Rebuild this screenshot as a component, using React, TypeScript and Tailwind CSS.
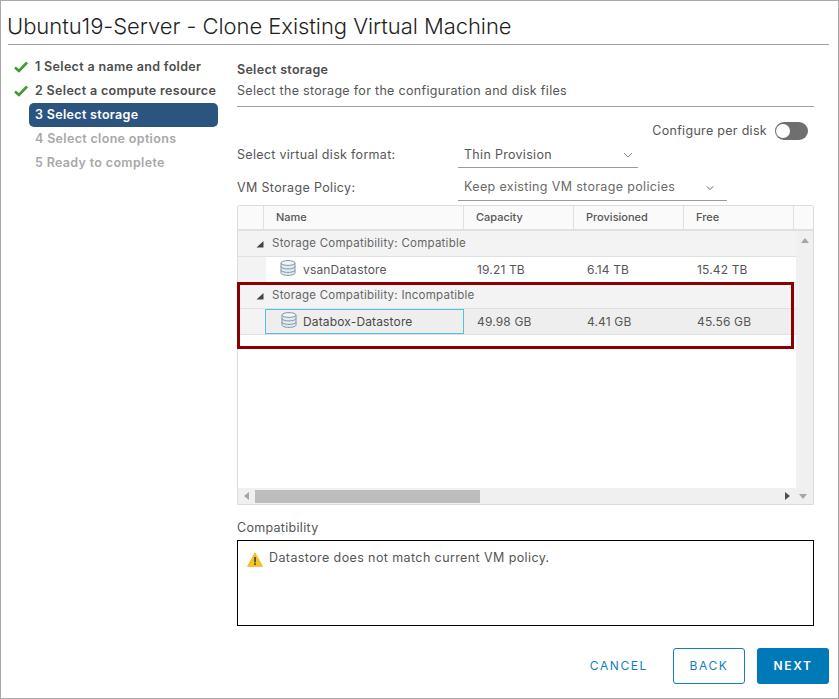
import React from "react";

const font = { fontFamily: '"Inter", "Lato", sans-serif' };

function Check() {
  return (
    <svg width="14" height="12" viewBox="0 0 14 12" className="absolute left-[-15px] top-[6px]">
      <path d="M1 6.5 L5 10 L13 1.5" fill="none" stroke="#3f9c2f" strokeWidth="2.6" />
    </svg>
  );
}

function Db() {
  return (
    <svg width="16" height="16" viewBox="0 0 16 16" className="ml-[-1px] mt-[-3px] shrink-0">
      <path d="M1 3v10c0 1.3 3.1 2.4 7 2.4s7-1.100 7-2.400V3" fill="#e4eaee" stroke="#7d97a8" strokeWidth="1" />
      <ellipse cx="8" cy="3" rx="7" ry="2.400" fill="#f3f6f7" stroke="#7d97a8" />
      <path d="M1 6.500c0 1.300 3.100 2.400 7 2.400s7-1.100 7-2.400M1 10c0 1.300 3.100 2.400 7 2.400s7-1.100 7-2.400" fill="none" stroke="#7d97a8" />
    </svg>
  );
}

function Chevron({ color = "#8a8a8a", w = 10 }: { color?: string; w?: number }) {
  return (
    <svg width={w} height="6" viewBox="0 0 10 6">
      <path d="M1 1l4 4 4-4" fill="none" stroke={color} strokeWidth="1" />
    </svg>
  );
}

function GroupRow({ label }: { label: string }) {
  return (
    <div className="flex h-[26px] items-center border-b border-[#e0e0e0] bg-[#f3f3f3] pl-[18px] text-[11.5px] tracking-[0.25px] text-[#666]">
      <svg width="8" height="8" viewBox="0 0 8 8" className="mr-[8px] shrink-0">
        <path d="M7.5 1v6.500H0.500z" fill="#444" />
      </svg>
      {label}
    </div>
  );
}

function DataRow({ name, cap, prov, free, selected }: { name: string; cap: string; prov: string; free: string; selected?: boolean }) {
  return (
    <div className={`flex h-[26px] border-b border-[#e0e0e0] text-[12px] tracking-[0.15px] text-[#565656] ${selected ? "bg-[#eeeeee]" : "bg-white"}`}>
      <div className={`shrink-0 bg-[#f3f3f3] ${selected ? "w-[27px]" : "w-[28px]"}`} />
      {selected ? (
        <div className="flex h-[25px] w-[199px] shrink-0 items-center gap-[6px] border border-[#56bfe6] pl-[16px] text-[#4a4a4a]">
          <Db />
          <span>{name}</span>
        </div>
      ) : (
        <div className="flex w-[199px] shrink-0 items-center gap-[7px] pl-[15px]">
          <Db />
          <span>{name}</span>
        </div>
      )}
      <div className={`flex shrink-0 items-center ${selected ? "w-[111px] pl-[13px]" : "w-[110px] pl-[12px]"}`}>{cap}</div>
      <div className="flex w-[110px] shrink-0 items-center pl-[12px]">{prov}</div>
      <div className="flex flex-1 items-center pl-[12px]">{free}</div>
    </div>
  );
}

function Th({ label, w, pl = 12 }: { label: string; w: string; pl?: number }) {
  return (
    <div className={`flex items-center border-r border-[#e0e0e0] text-[11px] font-medium text-[#565656] ${w}`} style={{ paddingLeft: pl }}>
      {label}
    </div>
  );
}

export default function App() {
  return (
    <div className="flex h-[699px] w-[839px] flex-col border border-[#a8a8a8] bg-white pl-[7px] pr-[9px]" style={font}>
      <div className="flex h-[44px] shrink-0 items-center border-b border-[#a0a0a0] pt-[6px] text-[22px] font-light leading-none tracking-[-0.05px] text-[#1f1f1f]">
        <span className="ml-[-1px]">Ubuntu19-Server - Clone Existing Virtual Machine</span>
      </div>

      <div className="flex flex-1 pr-[15px]">
        <nav className="w-[229px] shrink-0 pl-[21px] pt-[10px] pr-[19px] text-[12.5px] font-semibold tracking-[0.33px] text-[#4d4d4d]">
          <div className="relative flex h-[24px] items-center pl-[6px]">
            <Check />1 Select a name and folder
          </div>
          <div className="relative flex h-[24px] items-center pl-[6px]">
            <Check />2 Select a compute resource
          </div>
          <div className="flex h-[24px] items-center rounded-[5px] bg-[#2b5580] pl-[6px] text-white">3 Select storage</div>
          <div className="flex h-[24px] items-center pl-[6px] text-[#a8a8a8]">4 Select clone options</div>
          <div className="flex h-[24px] items-center pl-[6px] text-[#a8a8a8]">5 Ready to complete</div>
        </nav>

        <main className="flex min-w-0 flex-1 flex-col">
          <div className="mt-[15px] text-[12.5px] font-semibold leading-[20px] tracking-[0.3px] text-[#4d4d4d]">Select storage</div>
          <div className="mt-[1px] border-b border-[#a0a0a0] pb-[5px] text-[12.5px] leading-[20px] tracking-[0.31px] text-[#565656]">
            Select the storage for the configuration and disk files
          </div>

          <div className="mt-[14px] flex h-[20px] items-center justify-end gap-[8px] pr-[6px] text-[12.5px] tracking-[0.3px] text-[#565656]">
            Configure per disk
            <div className="flex h-[18px] w-[33px] items-center rounded-full bg-[#6f6f6f] pl-[1px]">
              <div className="h-[14px] w-[14px] rounded-full bg-white" />
            </div>
          </div>

          <div className="mt-[2px] flex h-[25px] items-center text-[12.5px] tracking-[0.3px] text-[#565656]">
            <span className="w-[221px] shrink-0">Select virtual disk format:</span>
            <div className="flex h-[25px] w-[180px] items-center justify-between border-b border-[#9a9a9a] pl-[6px] pr-[5px]">
              <span>Thin Provision</span>
              <Chevron />
            </div>
          </div>

          <div className="mt-[7px] flex h-[26px] items-center text-[12.5px] tracking-[0.35px] text-[#565656]">
            <span className="w-[221px] shrink-0">VM Storage Policy:</span>
            <div className="flex h-[26px] w-[269px] items-center justify-between border-b border-[#9a9a9a] pl-[6px] pr-[13px] text-[#6a6a6a]">
              <span>Keep existing VM storage policies</span>
              <Chevron color="#444" w={8} />
            </div>
          </div>

          <div className="relative mt-[4px] flex h-[300px] w-[577px] flex-col rounded-t-[2px] border border-[#dcdcdc]">
            <div className="flex h-[25px] shrink-0 border-b-2 border-[#e0e0e0] bg-[#fafafa]">
              <Th label="" w="w-[26px]" pl={0} />
              <Th label="Name" w="w-[200px]" />
              <Th label="Capacity" w="w-[110px]" />
              <Th label="Provisioned" w="w-[110px]" />
              <Th label="Free" w="w-[110px]" />
            </div>
            <div className="flex min-h-0 flex-1">
              <div className="w-[558px] shrink-0">
                <GroupRow label="Storage Compatibility: Compatible" />
                <DataRow name="vsanDatastore" cap="19.21 TB" prov="6.14 TB" free="15.42 TB" />
                <GroupRow label="Storage Compatibility: Incompatible" />
                <DataRow name="Databox-Datastore" cap="49.98 GB" prov="4.41 GB" free="45.56 GB" selected />
              </div>
              <div className="flex flex-1 justify-center bg-[#f0f0f0] pt-[7px]">
                <svg width="8" height="5" viewBox="0 0 8 5"><path d="M0 5L4 0l4 5z" fill="#a6a6a6" /></svg>
              </div>
            </div>
            <div className="flex h-[16px] shrink-0 items-center bg-[#f0f0f0] pl-[6px] pr-[6px]">
              <svg width="5" height="8" viewBox="0 0 5 8" className="shrink-0"><path d="M5 0L0 4l5 4z" fill="#a6a6a6" /></svg>
              <div className="ml-[6px] h-[13px] w-[225px] bg-[#bdbdbd]" />
              <div className="flex-1" />
              <svg width="5" height="8" viewBox="0 0 5 8" className="shrink-0"><path d="M0 0l5 4-5 4z" fill="#505050" /></svg>
              <svg width="8" height="5" viewBox="0 0 8 5" className="ml-[9px] shrink-0"><path d="M0 0h8L4 5z" fill="#a6a6a6" /></svg>
            </div>
            <div className="pointer-events-none absolute left-[-1px] top-[76px] h-[67px] w-[557px] border-[3px] border-[#8b0000]" />
          </div>

          <div className="mt-[14px] text-[12.5px] leading-[18px] tracking-[0.3px] text-[#565656]">Compatibility</div>
          <div className="mt-[3px] flex h-[86px] w-[577px] items-start gap-[6px] border border-black px-[9px] pt-[8px] text-[12.5px] leading-[18px] tracking-[0.4px] text-[#565656]">
            <svg width="16" height="15" viewBox="0 0 16 15" className="mt-[3px] shrink-0">
              <path d="M8 0.800L15.600 14.400H0.400z" fill="#f7c325" stroke="#e0ac10" strokeWidth="0.6" />
              <rect x="7.200" y="5" width="1.700" height="5.400" fill="#4a4a3a" />
              <rect x="7.200" y="11.200" width="1.700" height="1.800" fill="#4a4a3a" />
            </svg>
            Datastore does not match current VM policy.
          </div>

          <div className="mt-[22px] flex h-[36px] items-center justify-end text-[12px] tracking-[1.6px]">
            <button className="mr-[25px] text-[#0f7fbd]">CANCEL</button>
            <button className="mr-[12px] h-[36px] w-[72px] rounded-[3px] border border-[#0f7fbd] text-[#0f7fbd]">BACK</button>
            <button className="mr-[-15px] h-[36px] w-[72px] rounded-[3px] bg-[#0079b8] font-semibold text-white">NEXT</button>
          </div>
        </main>
      </div>
    </div>
  );
}
